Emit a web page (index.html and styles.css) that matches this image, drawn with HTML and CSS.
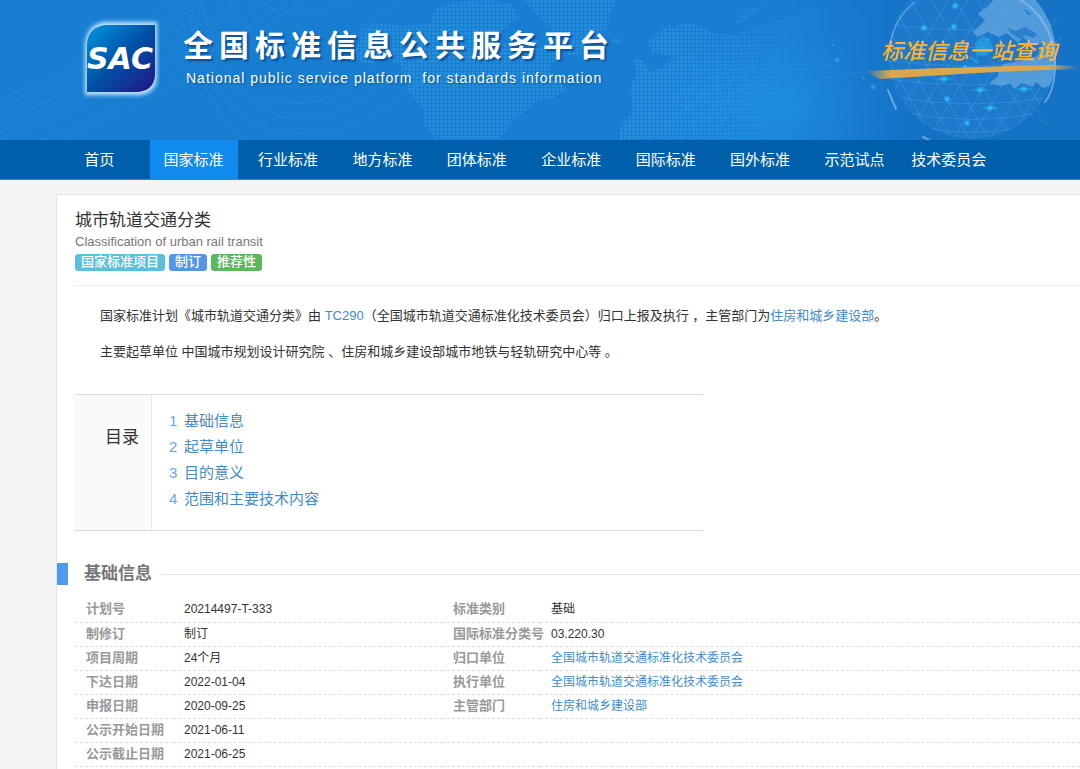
FILE: index.html
```html
<!DOCTYPE html>
<html lang="zh-CN">
<head>
<meta charset="utf-8">
<meta name="viewport" content="width=device-width, initial-scale=1">
<title>城市轨道交通分类 - 全国标准信息公共服务平台</title>
<link rel="stylesheet" href="styles.css">
</head>
<body>
<header class="banner">
  <svg class="banner-art" viewBox="0 0 1080 140" preserveAspectRatio="xMaxYMid slice" aria-hidden="true">
    <defs>
      <pattern id="dots" width="4" height="4" patternUnits="userSpaceOnUse"><rect width="3" height="3" fill="#38a7ec"/></pattern>
      <radialGradient id="glow"><stop offset="0" stop-color="#1b91e3" stop-opacity=".6"/><stop offset="1" stop-color="#1b91e3" stop-opacity="0"/></radialGradient>
      <linearGradient id="shade"><stop offset="0" stop-color="#1573c6" stop-opacity="0"/><stop offset="1" stop-color="#1573c6"/></linearGradient>
      <linearGradient id="fade"><stop offset="0" stop-color="#fff"/><stop offset="1" stop-color="#000"/></linearGradient>
      <mask id="east"><rect x="600" width="290" height="140" fill="url(#fade)"/></mask>
      <radialGradient id="star"><stop offset="0" stop-color="#4fe0ff"/><stop offset=".35" stop-color="#2bb8fa" stop-opacity=".8"/><stop offset="1" stop-color="#2bb8fa" stop-opacity="0"/></radialGradient>
      <linearGradient id="stroke"><stop offset="0" stop-color="#e9a640" stop-opacity="0"/><stop offset=".12" stop-color="#dca64d"/><stop offset=".85" stop-color="#dca64d"/><stop offset="1" stop-color="#dca64d" stop-opacity="0"/></linearGradient>
      <clipPath id="globe"><circle cx="972" cy="55" r="84"/></clipPath>
    </defs>
    <rect width="1080" height="140" fill="#187ed2"/>
    <ellipse cx="790" cy="105" rx="150" ry="75" fill="url(#glow)"/>
    <rect x="790" width="120" height="140" fill="url(#shade)"/>
    <rect x="909" width="171" height="140" fill="#1573c6"/>
    <g fill="none" stroke="#3d98df" stroke-opacity=".28">
      <path d="M0 97C60 82 120 30 176 0M0 104C65 87 130 35 192 0M0 111C70 92 140 40 208 0M0 118C75 97 150 45 224 0M0 125C80 102 160 50 240 0M0 132C85 107 170 55 256 0M0 139C90 112 180 60 272 0M40 140C120 112 200 60 288 0M60 140C140 112 215 60 304 0"/>
      <path d="M175 0C195 60 210 120 250 140M190 0C205 70 225 103 290 103S360 70 420 35M200 0C220 65 240 118 300 118S370 85 430 55M185 0C205 75 225 133 300 133S380 100 440 75M230 0C245 35 270 48 310 46S370 20 400 0M260 0C275 15 310 18 350 0"/>
      <path d="M635 140C670 95 710 65 790 62M655 140C690 95 730 70 815 62M675 140C710 100 760 73 835 65M700 140C735 105 785 80 865 72"/>
    </g>
    <path fill="url(#dots)" opacity=".36" d="M362 30l16-7 24 3 28-2 4-14 18-8 36-2 22 4 10 14-15 8-8 12 14 10 20-14 10 12 20 8-13 14 12 12 6 10-12 7-20 6-16 13-10 10-8 14 4 9-6-1-7-8-19 2-4 10 14 14h-26l-10-14-21-26-3-18-13-16-8-26-12-6-25 4-10-8z"/>
    <path fill="url(#dots)" opacity=".36" d="M524 0h92l-6 12-2 16-20 10-8 17-10 2-11-16-9-15-16-14zM612 38h9v5h-8z"/>
    <g mask="url(#east)"><path fill="url(#dots)" opacity=".5" d="M672 27l14-4 14 2 13 8 24 2 15-8 30-8 20-9 34-7 28 10h26v130H618l3-17 12-15-3-22 6-16-3-14 9 1 9 12 13-6 11-10-22-3-5-10 8-9 14-10zM735 22l7-10 23-9-8 8-15 10-2 5z"/></g>
    <g clip-path="url(#globe)">
      <circle cx="972" cy="55" r="84" fill="#2580d0" fill-opacity=".45"/>
      <g fill="none" stroke="#72b9ef" stroke-opacity=".34" stroke-width=".8">
        <path d="M889 25q83 10 166 0M889 43q83 9 166 0M889 61q83 10 166 0M890 79q83 12 164 0M895 97q78 14 155 0M903 112q70 15 140 0M918 126q54 13 108 0"/>
        <path d="M890 0L970 140M907 -6L988 138M924 -12L1008 130M944 -18L1027 120M965 -20L1042 108M988 -20L1051 92M889 30L950 135M888 60L926 127M1054 0L970 140M1038 -6L954 138M1019 -12L934 130M1000 -18L916 120M980 -20L904 105M960 -20L894 91M1056 30L990 140M1056 60L1018 125"/>
      </g>
      <path fill="#78b4e5" fill-opacity=".58" d="M1000-8l-12 14-10 8 7 6-12 12 5 5 10-5 11 5 8-4 11 10 5-6 8 8 12-2-6 13-16 5-18 3-6 13-8 6 12 3 9-3 4 6 8-6 11 4 3-5 7 6 17-6 8-24V0l-20-18z"/>
      <path fill="#1975c8" fill-opacity=".7" d="M1007 27l8 4 10-4 12 7-3 4-9-3-5 4-9-6zM1023 8l9 6-4 1zM1014 54l12-5 3 4-9 5z"/>
      <path fill="#2baeea" fill-opacity=".55" d="M975 43l8-7 7 3 3 10-8 7-9-1zM971 56l9 6-3 2-8-6z"/>
    </g>
    <g fill="none" stroke="#9acbf2" stroke-linecap="round">
      <path d="M915 2Q894 18 890 46" stroke-opacity=".5" stroke-width="1.5"/>
      <path d="M1019-1Q1051 18 1055 58Q1056 88 1045 102" stroke-opacity=".55" stroke-width="2"/>
      <path d="M888 90l5 12 3 7M923 137l8 4" stroke-opacity=".6" stroke-width="2"/>
      <path d="M1031 105l8 7M1028 113l7 5M1039 118l8 7M1044 31l12-9M1048 25l11-9M1052 44l10-6" stroke-opacity=".2"/>
    </g>
    <g fill="url(#star)">
      <circle cx="837" cy="60" r="4" opacity=".5"/><circle cx="873" cy="87" r="4" opacity=".5"/><circle cx="833" cy="45" r="2" opacity=".5"/><circle cx="863" cy="78" r="2" opacity=".5"/>
      <circle cx="924" cy="28" r="4"/><circle cx="954" cy="27" r="4"/><circle cx="955" cy="6" r="4"/><circle cx="944" cy="79" r="4"/><circle cx="980" cy="90" r="4"/><circle cx="947" cy="99" r="4"/><circle cx="990" cy="108" r="4"/><circle cx="967" cy="123" r="4"/><circle cx="1024" cy="89" r="4"/><circle cx="965" cy="67" r="3"/>
      <ellipse cx="944" cy="79" rx="12" ry="1"/><ellipse cx="980" cy="90" rx="12" ry="1"/><ellipse cx="990" cy="108" rx="12" ry="1"/><ellipse cx="1024" cy="89" rx="12" ry="1"/>
    </g>
    <path fill="url(#stroke)" d="M865 71Q960 67 1052 65L1079 66V69Q1000 71 928 76L880 79Z"/>
  </svg>
  <div class="brand">
    <svg class="logo" viewBox="0 0 80 84" role="img" aria-label="SAC">
      <defs>
        <linearGradient id="tile" x2="1" y2="1"><stop offset="0" stop-color="#0096df"/><stop offset=".5" stop-color="#0050a5"/><stop offset="1" stop-color="#241487"/></linearGradient>
        <filter id="halo" x="-20%" y="-20%" width="140%" height="140%"><feGaussianBlur stdDeviation="2"/></filter>
      </defs>
      <path d="M24 6H77V62Q76 77 60 79H5V28Q7 9 24 6Z" fill="#c4e7ff" filter="url(#halo)"/>
      <path d="M26 9H75V59Q74 75 57 76H7V28Q8 11 26 9Z" fill="url(#tile)"/>
      <text class="logo-text" x="7" y="53">SAC</text>
    </svg>
    <div class="brand-names">
      <div class="brand-title">全国标准信息公共服务平台</div>
      <div class="brand-subtitle">National public service platform&nbsp; for standards information</div>
    </div>
  </div>
  <p class="slogan">标准信息一站查询</p>
</header>
<nav class="nav">
  <ul class="nav-list">
    <li><a href="#">首页</a></li>
    <li><a href="#" class="active" aria-current="page">国家标准</a></li>
    <li><a href="#">行业标准</a></li>
    <li><a href="#">地方标准</a></li>
    <li><a href="#">团体标准</a></li>
    <li><a href="#">企业标准</a></li>
    <li><a href="#">国际标准</a></li>
    <li><a href="#">国外标准</a></li>
    <li><a href="#">示范试点</a></li>
    <li><a href="#">技术委员会</a></li>
  </ul>
</nav>
<main class="card">
  <div class="title-block">
    <h1 class="title">城市轨道交通分类</h1>
    <p class="title-en">Classification of urban rail transit</p>
    <div class="tags"><span class="tag tag-info">国家标准项目</span><span class="tag tag-primary">制订</span><span class="tag tag-success">推荐性</span></div>
  </div>
  <div class="intro">
    <p>国家标准计划《城市轨道交通分类》由 <a href="#">TC290</a>（全国城市轨道交通标准化技术委员会）归口上报及执行 ，主管部门为<a href="#">住房和城乡建设部</a>。</p>
    <p>主要起草单位 中国城市规划设计研究院 、住房和城乡建设部城市地铁与轻轨研究中心等 。</p>
  </div>
  <section class="toc">
    <h2 class="toc-title">目录</h2>
    <ol class="toc-list">
      <li><span class="num">1</span><a href="#basic">基础信息</a></li>
      <li><span class="num">2</span><a href="#">起草单位</a></li>
      <li><span class="num">3</span><a href="#">目的意义</a></li>
      <li><span class="num">4</span><a href="#">范围和主要技术内容</a></li>
    </ol>
  </section>
  <h2 class="section-title" id="basic">基础信息</h2>
  <table class="info">
    <colgroup><col class="c-label"><col class="c-value"><col class="c-label"><col></colgroup>
    <tbody>
      <tr><th scope="row">计划号</th><td>20214497-T-333</td><th scope="row">标准类别</th><td>基础</td></tr>
      <tr><th scope="row">制修订</th><td>制订</td><th scope="row">国际标准分类号</th><td>03.220.30</td></tr>
      <tr><th scope="row">项目周期</th><td>24个月</td><th scope="row">归口单位</th><td><a href="#">全国城市轨道交通标准化技术委员会</a></td></tr>
      <tr><th scope="row">下达日期</th><td>2022-01-04</td><th scope="row">执行单位</th><td><a href="#">全国城市轨道交通标准化技术委员会</a></td></tr>
      <tr><th scope="row">申报日期</th><td>2020-09-25</td><th scope="row">主管部门</th><td><a href="#">住房和城乡建设部</a></td></tr>
      <tr><th scope="row">公示开始日期</th><td>2021-06-11</td><td></td><td></td></tr>
      <tr><th scope="row">公示截止日期</th><td>2021-06-25</td><td></td><td></td></tr>
    </tbody>
  </table>
</main>
</body>
</html>
```
FILE: styles.css
```css
* { box-sizing: border-box; }
body {
  margin: 0;
  background: #f4f4f4;
  color: #333;
  font: 13px/24px "Liberation Sans", "Noto Sans CJK SC", sans-serif;
}
a { color: #428bca; text-decoration: none; }
h1, h2, p, ul, ol { margin: 0; padding: 0; font-weight: normal; }
ul, ol { list-style: none; }

.banner {
  position: relative;
  display: flex;
  justify-content: space-between;
  height: 140px;
  padding: 16px 23px 0 80px;
  overflow: hidden;
  background: #187ed2;
}
.banner-art { position: absolute; inset: 0; width: 100%; height: 100%; }
.brand { position: relative; display: flex; gap: 23px; }
.logo { width: 80px; height: 84px; }
.logo-text { font: italic bold 30px "DejaVu Sans", sans-serif; fill: #fff; }
.brand-names { padding-top: 8px; color: #fff; white-space: nowrap; }
.brand-title {
  font-size: 30px;
  font-weight: bold;
  line-height: 44px;
  letter-spacing: 6px;
  text-shadow: 2px 2px 2px #0b4f95;
}
.brand-subtitle {
  padding-left: 3px;
  font-size: 14px;
  line-height: 20px;
  letter-spacing: 1px;
  text-shadow: 1px 1px 2px #0b4f95;
}
.slogan {
  position: relative;
  padding-top: 17px;
  color: #fdb32b;
  font: italic 500 22px/32px "Noto Sans CJK SC", sans-serif;
  white-space: nowrap;
}

.nav { padding-left: 52px; background: #005fab; border-bottom: 1px solid #3f87c1; }
.nav-list { display: flex; max-width: 944px; }
.nav-list li { display: flex; flex: 1 1 0; min-width: 0; justify-content: center; }
.nav-list a { padding: 0 14px; color: #fff; font-size: 15px; line-height: 39px; white-space: nowrap; }
.nav-list .active { background: #108aed; }

.card {
  margin: 14px 0 0 56px;
  padding: 14px 0 16px 18px;
  background: #fff;
  border: solid #e5e5e5;
  border-width: 1px 0 0 1px;
}
.title-block { padding-bottom: 14px; border-bottom: 1px solid #eee; }
.title { font-size: 17px; line-height: 24px; }
.title-en { color: #777; font-size: 13px; line-height: 18px; }
.tags { display: flex; gap: 4px; padding-top: 3px; }
.tag {
  padding: 0 6px 1px;
  border-radius: 3px;
  color: #fff;
  font-size: 13px;
  font-weight: 500;
  line-height: 16px;
}
.tag-info { background: #5bc0de; }
.tag-primary { background: #5297ea; }
.tag-success { background: #5cb85c; }

.intro { padding: 12px 25px 24px; line-height: 36px; }

.toc { display: flex; max-width: 628px; border: solid #ddd; border-width: 1px 0; }
.toc-title {
  flex: none;
  width: 77px;
  padding: 31px 12px 0 0;
  background: #fafafa;
  border-right: 1px solid #e8e8e8;
  font-size: 17px;
  text-align: right;
}
.toc-list { padding: 13px 17px 18px; font-size: 15px; line-height: 26px; }
.toc-list li { display: flex; }
.num { width: 15px; color: #6da3e8; }

.section-title {
  display: flex;
  align-items: center;
  gap: 8px;
  margin: 32px 0 13px -18px;
  color: #777;
  font-size: 17px;
  font-weight: bold;
  line-height: 22px;
}
.section-title::before { content: ""; width: 11px; height: 22px; margin-right: 8px; background: #4d9aee; }
.section-title::after { content: ""; flex: 1; height: 1px; background: #e8e8e8; }

.info { width: 100%; table-layout: fixed; border-collapse: collapse; font-size: 12px; }
.c-label { width: 98px; }
.c-value { width: 269px; }
.info tr { border-bottom: 1px dashed #ddd; }
.info th, .info td { height: 24px; padding: 0 0 0 11px; line-height: 22px; text-align: left; vertical-align: baseline; white-space: nowrap; }
.info th { color: #999; font-size: 13px; }
```
